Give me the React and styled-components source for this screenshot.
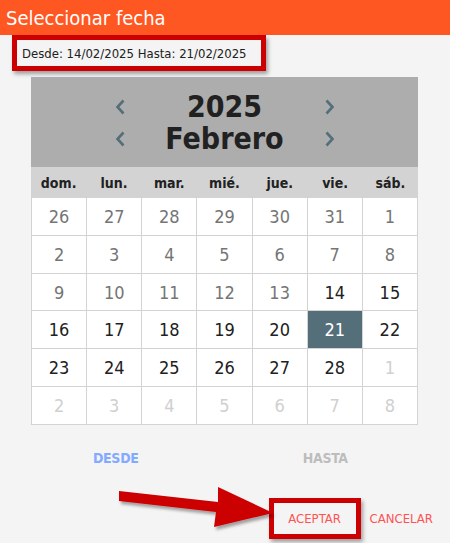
import React from "react";
import styled, { createGlobalStyle } from "styled-components";

const GlobalStyle = createGlobalStyle`
  html, body {
    margin: 0;
    padding: 0;
    background: #f4f4f4;
  }
  body {
    font-family: "DejaVu Sans Condensed", "DejaVu Sans", sans-serif;
    color: #212121;
  }
`;

const Page = styled.div`
  position: relative;
  width: 450px;
  height: 543px;
  overflow: hidden;
  background: #f4f4f4;
`;

const TitleBar = styled.header`
  height: 35px;
  box-sizing: border-box;
  padding: 1px 0 0 6px;
  display: flex;
  align-items: center;
  background: #ff5722;
  color: #ffffff;
  font-size: 20px;
`;

const Callout = styled.div`
  box-sizing: border-box;
  display: flex;
  align-items: center;
  width: ${(p) => p.$w}px;
  height: ${(p) => p.$h}px;
  border: 5px solid #cc0000;
  box-shadow: 2px 3px 4px rgba(0, 0, 0, 0.35);
`;

const RangeBar = styled.div`
  padding-left: 12px;
`;

const RangeText = styled.span`
  padding-left: 5px;
  font-size: 13px;
  color: #212121;
`;

const Calendar = styled.section`
  width: 387px;
  margin: 6px 0 0 31px;
`;

const Header = styled.div`
  height: 90px;
  box-sizing: border-box;
  padding-top: 14px;
  background: #adadad;
`;

const NavRow = styled.div`
  display: grid;
  grid-template-columns: 10px 200px 10px;
  justify-content: center;
  align-items: center;
  height: 32px;
`;

const NavLabel = styled.div`
  text-align: center;
  font-size: 30px;
  font-weight: bold;
  color: #212121;
  line-height: 32px;
`;

const Chevron = ({ dir }) => (
  <svg width="10" height="16" viewBox="0 0 10 16">
    <path
      d={dir === "left" ? "M8.5 1.5 L2.5 8 L8.5 14.5" : "M1.5 1.5 L7.5 8 L1.5 14.5"}
      fill="none"
      stroke="#546e7a"
      strokeWidth="2.6"
    />
  </svg>
);

const WeekRow = styled.div`
  display: grid;
  grid-template-columns: repeat(7, 1fr);
  height: 31px;
  align-items: center;
  background: #d3d3d3;
`;

const WeekDay = styled.div`
  text-align: center;
  font-size: 14px;
  font-weight: bold;
  color: #212121;
`;

const DayGrid = styled.div`
  display: grid;
  grid-template-columns: repeat(7, 1fr);
  grid-template-rows: repeat(6, 1fr);
  gap: 1px;
  height: 227px;
  box-sizing: border-box;
  border: 1px solid #d3d3d3;
  border-top: none;
  background: #d3d3d3;
`;

const dayColors = {
  muted: "#757575",
  current: "#212121",
  outside: "#d0d0d0",
  selected: "#ffffff",
};

const Day = styled.div`
  display: flex;
  align-items: center;
  justify-content: center;
  font-size: 18px;
  background: ${(p) => (p.$kind === "selected" ? "#546e7a" : "#ffffff")};
  color: ${(p) => dayColors[p.$kind]};
`;

const Tabs = styled.div`
  display: grid;
  grid-template-columns: 1fr 1fr;
  height: 36px;
  margin-top: 15px;
  padding: 0 20px 0 11px;
  align-items: center;
`;

const Tab = styled.div`
  text-align: center;
  font-size: 14px;
  letter-spacing: -0.3px;
  font-weight: bold;
  color: ${(p) => (p.$active ? "#82aaff" : "#bdbdbd")};
`;

const Actions = styled.div`
  display: flex;
  justify-content: flex-end;
  align-items: center;
  gap: 9px;
  margin-top: 22px;
  padding-right: 17px;
`;

const ActionButton = styled.div`
  flex: 1;
  text-align: center;
  font-size: 13px;
  color: #ff5252;
`;

const PlainAction = styled.div`
  font-size: 13px;
  color: #ff5252;
`;

const Overlay = styled.svg`
  position: absolute;
  left: 0;
  top: 0;
  pointer-events: none;
`;

const weekDays = ["dom.", "lun.", "mar.", "mié.", "jue.", "vie.", "sáb."];

const days = [
  ...[26, 27, 28, 29, 30, 31].map((d) => [d, "muted"]),
  ...Array.from({ length: 13 }, (_, i) => [i + 1, "muted"]),
  ...Array.from({ length: 15 }, (_, i) => [i + 14, i + 14 === 21 ? "selected" : "current"]),
  ...Array.from({ length: 8 }, (_, i) => [i + 1, "outside"]),
];

export default function App() {
  return (
    <Page>
      <GlobalStyle />
      <TitleBar>Seleccionar fecha</TitleBar>
      <RangeBar>
        <Callout $w={254} $h={36}>
          <RangeText>Desde: 14/02/2025 Hasta: 21/02/2025</RangeText>
        </Callout>
      </RangeBar>

      <Calendar>
        <Header>
          <NavRow>
            <Chevron dir="left" />
            <NavLabel>2025</NavLabel>
            <Chevron dir="right" />
          </NavRow>
          <NavRow>
            <Chevron dir="left" />
            <NavLabel>Febrero</NavLabel>
            <Chevron dir="right" />
          </NavRow>
        </Header>
        <WeekRow>
          {weekDays.map((w) => (
            <WeekDay key={w}>{w}</WeekDay>
          ))}
        </WeekRow>
        <DayGrid>
          {days.map(([d, kind], i) => (
            <Day key={i} $kind={kind}>
              {d}
            </Day>
          ))}
        </DayGrid>
      </Calendar>

      <Tabs>
        <Tab $active>DESDE</Tab>
        <Tab>HASTA</Tab>
      </Tabs>

      <Actions>
        <Callout $w={92} $h={41}>
          <ActionButton>ACEPTAR</ActionButton>
        </Callout>
        <PlainAction>CANCELAR</PlainAction>
      </Actions>

      <Overlay width="450" height="543" viewBox="0 0 450 543">
        <defs>
          <filter id="arrowShadow" x="-10%" y="-30%" width="130%" height="180%">
            <feDropShadow dx="2" dy="3" stdDeviation="1.6" floodColor="#000" floodOpacity="0.35" />
          </filter>
        </defs>
        <polygon
          points="119,491 218,502 218,487 273,513 214,527 216,512 119,501"
          fill="#cc0000"
          filter="url(#arrowShadow)"
        />
      </Overlay>
    </Page>
  );
}
